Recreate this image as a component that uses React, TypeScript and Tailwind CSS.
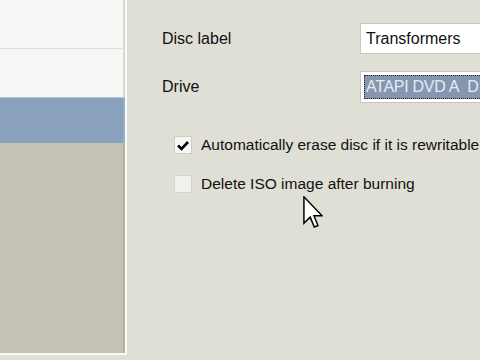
import React from "react";

const font = { fontFamily: '"Liberation Sans", Arial, sans-serif' };

const Cursor: React.FC = () => (
  <svg
    className="absolute left-[303px] top-[196px]"
    width="20"
    height="33"
    viewBox="0 0 12 20"
  >
    <path
      d="M0.5 0.5 L0.5 16.5 L4.3 12.8 L6.8 18.8 L9 17.9 L6.6 12 L11.5 12 Z"
      fill="#ffffff"
      stroke="#000000"
      strokeWidth="0.9"
      strokeLinejoin="miter"
    />
  </svg>
);

const App: React.FC = () => {
  return (
    <div
      className="relative w-[480px] h-[360px] bg-[#e0dfd5] flex overflow-hidden text-[#111]"
      style={font}
    >
      {/* Left list panel */}
      <div className="w-[127px] h-[355px] shrink-0 flex flex-col border-r-2 border-b-2 border-[#fbfbf6] bg-[#c4c2b5]">
        <div className="h-[48px] bg-[#f7f7f6] border-r-2 border-[#d9d8d2]" />
        <div className="h-[1px] bg-[#dcdcd8]" />
        <div className="h-[48px] bg-[#f7f7f6] border-r-2 border-[#d9d8d2]" />
        <div className="h-[46px] bg-[#8aa1bd] border-t border-[#b8c8dc] border-r-2 border-r-[#9ab0c8]" />
        <div className="flex-1 border-r-2 border-[#b5b3a8]" />
      </div>

      {/* Right form */}
      <div className="flex-1 flex flex-col pl-[35px] pt-[23px]">
        <div className="flex items-center h-[31px]">
          <span className="w-[198px] text-[16px]">Disc label</span>
          <div className="flex-1 h-full bg-white border border-[#c9c8c0] border-r-0 flex items-center pl-[5px] text-[16px] whitespace-nowrap">
            Transformers
          </div>
        </div>
        <div className="flex items-center h-[32px] mt-[17px]">
          <span className="w-[198px] text-[16px]">Drive</span>
          <div className="flex-1 h-full bg-white border border-[#c9c8c0] border-r-0 p-[3px] pr-0">
            <div className="h-full bg-[#8796ae] border border-dotted border-r-0 border-[#202830] flex items-center pl-[1px] text-[16px] tracking-[-0.3px] text-[#e4ebf5] whitespace-nowrap overflow-hidden">
              ATAPI DVD A&nbsp;&nbsp;D
            </div>
          </div>
        </div>

        <div className="flex items-center mt-[33px] pl-[12px] gap-[9px] h-[18px] whitespace-nowrap">
          <div className="w-[18px] h-[18px] shrink-0 bg-[#f6f6f2] border border-[#cfcec6] flex items-center justify-center">
            <svg width="12" height="11" viewBox="0 0 12 11">
              <path d="M1 5.5 L4.5 9 L11 2" fill="none" stroke="#000" strokeWidth="2.6" />
            </svg>
          </div>
          <span className="text-[15.5px]">Automatically erase disc if it is rewritable</span>
        </div>
        <div className="flex items-center mt-[21px] pl-[12px] gap-[9px] h-[18px] whitespace-nowrap">
          <div className="w-[18px] h-[18px] shrink-0 bg-[#f1f0ea] border border-[#d6d5cd]" />
          <span className="text-[15.5px]">Delete ISO image after burning</span>
        </div>
      </div>

      <Cursor />
    </div>
  );
};

export default App;
